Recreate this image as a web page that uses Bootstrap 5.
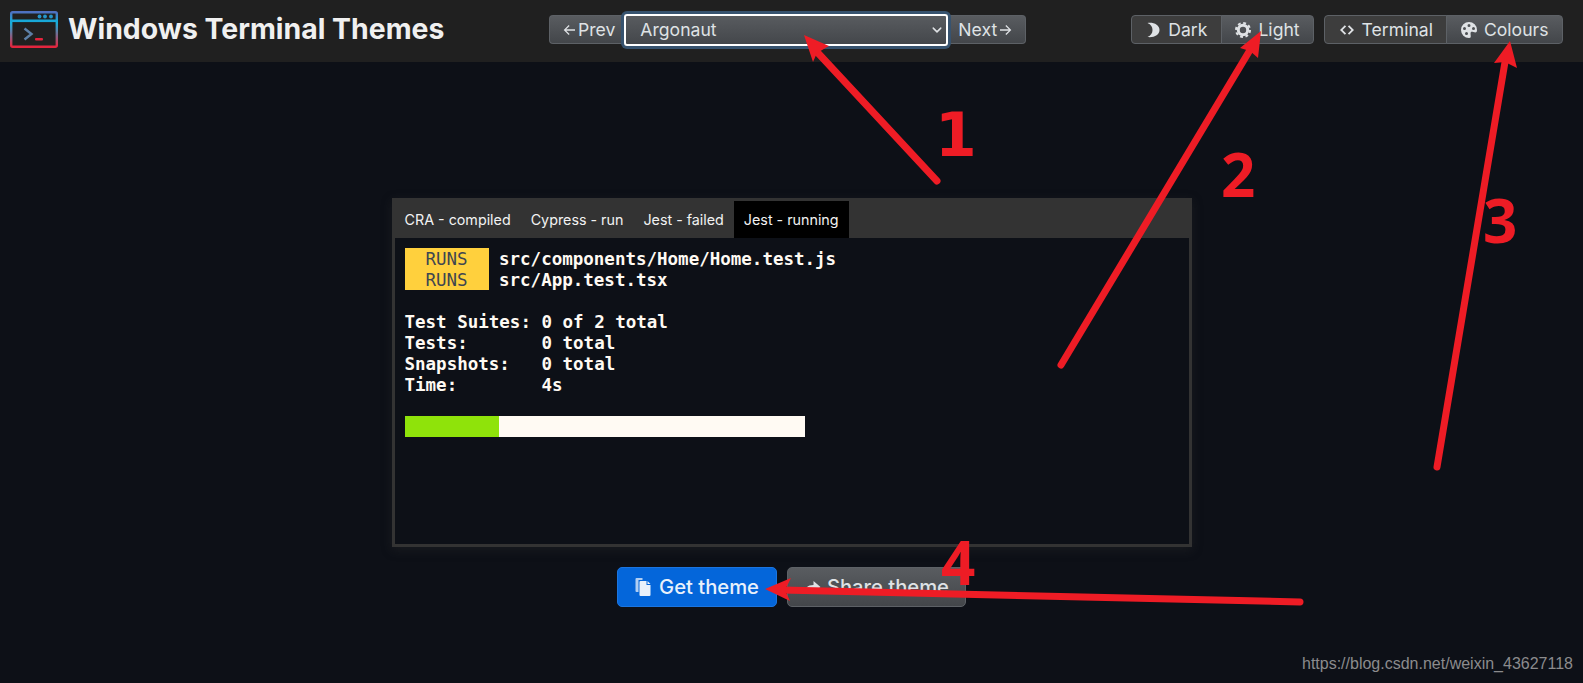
<!DOCTYPE html>
<html lang="en">
<head>
<meta charset="utf-8">
<title>Windows Terminal Themes</title>
<link href="https://cdn.jsdelivr.net/npm/bootstrap@5.3.0/dist/css/bootstrap.min.css" rel="stylesheet">
<style>
html,body{height:100%;}
body{background:#0d1017;font-family:Inter,"Liberation Sans",sans-serif;color:#eee;overflow:hidden;position:relative;}
.top-bar{height:62px;background:#202020;padding:0 20px 3px 10px;}
.brand-wrap{gap:10px;}
.brand-title{font-size:28.4px;font-weight:700;color:#f0f0f0;line-height:1;margin:0;}
.logo-svg{width:48px;height:37px;display:block;}
.tool-btn{--bs-btn-padding-y:0;--bs-btn-padding-x:13.5px;--bs-btn-font-size:17.6px;--bs-btn-line-height:27px;--bs-btn-border-radius:4px;
 color:#dfe2e5;border:1px solid #5d6166;background:linear-gradient(#595c60,#43464a);display:inline-flex;align-items:center;gap:7px;}
.tool-btn:hover{color:#dfe2e5;border-color:#5d6166;}
.tool-btn.is-on{background:#3d3d3d;}
.tool-btn svg{width:16px;height:16px;fill:currentColor;flex:none;}
.arrow-btn{gap:3px;}
.arrow-btn svg{width:12px;height:14px;}
.arrow-prev{padding-right:9px;padding-left:13px;}
.arrow-next{padding-left:10px;padding-right:13px;}
.tool-gap{gap:10px;}
.theme-select{width:324px;height:32px;flex:none;border-radius:3px;font-size:17.6px;line-height:28px;padding:0 30px 0 15px;color:#dfe2e5;border:1px solid #111;
 background-color:#4c4f53;background-image:url("data:image/svg+xml,%3csvg xmlns='http://www.w3.org/2000/svg' viewBox='0 0 16 16'%3e%3cpath fill='none' stroke='%23dfe2e5' stroke-linecap='round' stroke-linejoin='round' stroke-width='2.4' d='m2 5 6 6 6-6'/%3e%3c/svg%3e"),linear-gradient(#595c60,#43464a);background-repeat:no-repeat;background-position:right 5px center,0 0;background-size:10px 10px,100% 100%;
 outline:2px solid #fff;outline-offset:-2px;box-shadow:0 0 0 3px #37536f;position:relative;z-index:2;}
.theme-select:focus{color:#dfe2e5;border-color:#111;background-color:#4c4f53;box-shadow:0 0 0 3px #37536f;}
.theme-select option{background:#444;}
.term-box{width:800px;height:349px;margin:136px auto 0;border:3px solid #333;box-shadow:0 3px 10px rgba(50,50,50,.35);}
.term-tabs{background:#333;height:37px;}
.term-tab{font-size:14.3px;line-height:37px;padding:0 10px;color:#f2f2f2;white-space:nowrap;}
.term-tab.is-active{background:#000;}
.term-body{padding:10px;font-family:"DejaVu Sans Mono","Liberation Mono",monospace;font-size:17.5px;line-height:23px;color:#fffaf3;font-weight:700;}
.term-line{height:21px;white-space:pre;}
.runs-tag{display:inline-block;width:84px;height:21px;text-align:center;background:#ffd03d;color:#3f4650;font-weight:400;margin-right:10.5px;vertical-align:top;}
.term-bar{width:400px;height:21px;background:#fffaf3;}
.term-fill{height:100%;background:#8fe30a;}
.big-btn{--bs-btn-padding-y:0;--bs-btn-font-size:20.2px;--bs-btn-border-radius:5px;height:40px;padding:0 17px;display:inline-flex;align-items:center;gap:7px;font-weight:500;}
.big-btn svg{width:17px;height:18px;fill:currentColor;flex:none;}
.big-primary{background:#0466da;border:1px solid #1b75e0;color:#e9f1fb;}
.big-primary:hover{background:#0466da;color:#e9f1fb;}
.big-muted{background:linear-gradient(#595c60,#43464a);border:1px solid #5d6166;color:#dfe2e5;padding:0 16px;gap:6px;}
.action-row{margin-top:20px;gap:10px;}
.watermark{position:absolute;right:10px;top:655px;font:16px/18px "Liberation Sans",sans-serif;color:#8b8b8d;}
.marks{position:absolute;left:0;top:0;width:1583px;height:683px;pointer-events:none;z-index:5;}
.marks text{font:700 60px "Open Sans","Liberation Sans",sans-serif;fill:#ee1c25;}
.marks text.digit-one{font:700 60px "DejaVu Sans",sans-serif;}
</style>
</head>
<body>
<header class="top-bar d-flex align-items-center justify-content-between">
  <div class="d-flex align-items-center brand-wrap">
    <svg class="logo-svg" viewBox="0 0 48 37" aria-hidden="true">
      <defs><linearGradient id="lg" x1="0" y1="0" x2="0" y2="1"><stop offset="0" stop-color="#4f70c0"/><stop offset=".3" stop-color="#13b0dc"/><stop offset=".65" stop-color="#7a6a90"/><stop offset="1" stop-color="#e4243c"/></linearGradient></defs>
      <rect x="1.2" y="1.2" width="45.6" height="34.6" rx="1.5" fill="none" stroke="url(#lg)" stroke-width="2.4"/>
      <rect x="1" y="8.500" width="46" height="2.600" fill="#18a8d8"/>
      <circle cx="29.500" cy="5.500" r="1.900" fill="#2596c9"/><circle cx="35" cy="5.500" r="1.900" fill="#2596c9"/><circle cx="41" cy="5.500" r="1.900" fill="#2596c9"/>
      <path d="M14.500 17.500 21.500 23 14.500 28.500" fill="none" stroke="#5c7fa6" stroke-width="2.400"/>
      <rect x="25" y="27" width="8" height="2.600" rx="1" fill="#e4243c"/>
    </svg>
    <h1 class="brand-title">Windows Terminal Themes</h1>
  </div>
  <div class="d-flex align-items-center">
    <button class="btn tool-btn arrow-btn arrow-prev rounded-end-0 border-end-0" type="button"><svg viewBox="0 0 12 14"><path d="M12 6.300H3.200l3.400-3.400-.9-.9L.7 7l5 5 .9-.9-3.400-3.400H12z"/></svg>Prev</button>
    <select class="form-select theme-select" aria-label="Theme"><option>Argonaut</option></select>
    <button class="btn tool-btn arrow-btn arrow-next rounded-start-0 border-start-0" type="button">Next<svg viewBox="0 0 12 14"><path d="M0 6.300h8.800L5.400 2.900l.9-.9 5 5-5 5-.9-.9 3.400-3.400H0z"/></svg></button>
  </div>
  <div class="d-flex align-items-center tool-gap">
    <div class="btn-group">
      <button class="btn tool-btn is-on" type="button"><svg viewBox="0 0 16 16"><path d="M2.500 1C9 .2 14.500 3 14.500 8s-5.500 7.800-12 7C6 13.500 7.500 11 7.500 8S6 2.500 2.500 1z"/></svg>Dark</button>
      <button class="btn tool-btn" type="button"><svg viewBox="0 0 16 16"><circle cx="8" cy="8" r="4.700" fill="none" stroke="currentColor" stroke-width="3"/><circle cx="8" cy="8" r="7" fill="none" stroke="currentColor" stroke-width="2" stroke-dasharray="2.900 2.600"/></svg>Light</button>
    </div>
    <div class="btn-group">
      <button class="btn tool-btn is-on" type="button"><svg viewBox="0 0 16 16"><path d="M5.800 3.200 1 8l4.800 4.800 1.300-1.300L3.600 8l3.500-3.500zM10.200 3.200 8.900 4.500 12.400 8l-3.500 3.500 1.300 1.300L15 8z"/></svg>Terminal</button>
      <button class="btn tool-btn" type="button"><svg viewBox="0 0 16 16"><path d="M12.433 10.07C14.133 10.585 16 11.15 16 8a8 8 0 1 0-8 8c1.996 0 1.826-1.504 1.649-3.08-.124-1.101-.252-2.237.351-2.92.465-.527 1.42-.237 2.433.07zM8 5a1.500 1.500 0 1 1 0-3 1.500 1.500 0 0 1 0 3zm4.500 3a1.500 1.500 0 1 1 0-3 1.500 1.500 0 0 1 0 3zM5 6.500a1.500 1.500 0 1 1-3 0 1.500 1.500 0 0 1 3 0zm.5 6.500a1.500 1.500 0 1 1 0-3 1.500 1.500 0 0 1 0 3z"/></svg>Colours</button>
    </div>
  </div>
</header>

<main>
  <section class="term-box">
    <div class="term-tabs d-flex align-items-end">
      <div class="term-tab">CRA - compiled</div>
      <div class="term-tab">Cypress - run</div>
      <div class="term-tab">Jest - failed</div>
      <div class="term-tab is-active">Jest - running</div>
    </div>
    <div class="term-body">
      <div class="term-line"><span class="runs-tag">RUNS</span>src/components/Home/Home.test.js</div>
      <div class="term-line"><span class="runs-tag">RUNS</span>src/App.test.tsx</div>
      <div class="term-line"></div>
      <div class="term-line">Test Suites: 0 of 2 total</div>
      <div class="term-line">Tests:       0 total</div>
      <div class="term-line">Snapshots:   0 total</div>
      <div class="term-line">Time:        4s</div>
      <div class="term-line"></div>
      <div class="term-bar"><div class="term-fill" style="width:94px"></div></div>
    </div>
  </section>
  <div class="action-row d-flex justify-content-center">
    <button class="btn big-btn big-primary" type="button"><svg viewBox="0 0 16 18"><path d="M1 0h6v2H3v12H1a1 1 0 0 1-1-1V1a1 1 0 0 1 1-1z" opacity=".75"/><path d="M5 3h6v4h4v10a1 1 0 0 1-1 1H5a1 1 0 0 1-1-1V4a1 1 0 0 1 1-1zM12 3l3 3h-3z"/></svg>Get theme</button>
    <button class="btn big-btn big-muted" type="button"><svg viewBox="0 0 16 18"><path d="M9 3l7 6-7 6v-4C5 11 2 12 0 15c0-5 3-8 9-8z"/></svg>Share theme</button>
  </div>
</main>

<div class="watermark">https://blog.csdn.net/weixin_43627118</div>

<svg class="marks" viewBox="0 0 1583 683" aria-hidden="true">
  <g stroke="#ee1c25" stroke-width="7" fill="none" stroke-linecap="round">
    <path d="M937 181 818 53"/>
    <path d="M1061 365 1250 50"/>
    <path d="M1437 467 1505 62"/>
    <path d="M1300 602 782 590"/>
  </g>
  <g fill="#ee1c25">
    <path d="M804 35 829 46 817 53 813 62Z"/>
    <path d="M1261 31 1240 48 1250 51 1258 58Z"/>
    <path d="M1510 41 1494 63 1505 62 1517 68Z"/>
    <path d="M765 589 791 578 785 590 790 601Z"/>
  </g>
  <text class="digit-one" x="935" y="156">1</text>
  <text x="1221" y="197">2</text>
  <text x="1483" y="243">3</text>
  <text x="941" y="585">4</text>
</svg>
</body>
</html>
